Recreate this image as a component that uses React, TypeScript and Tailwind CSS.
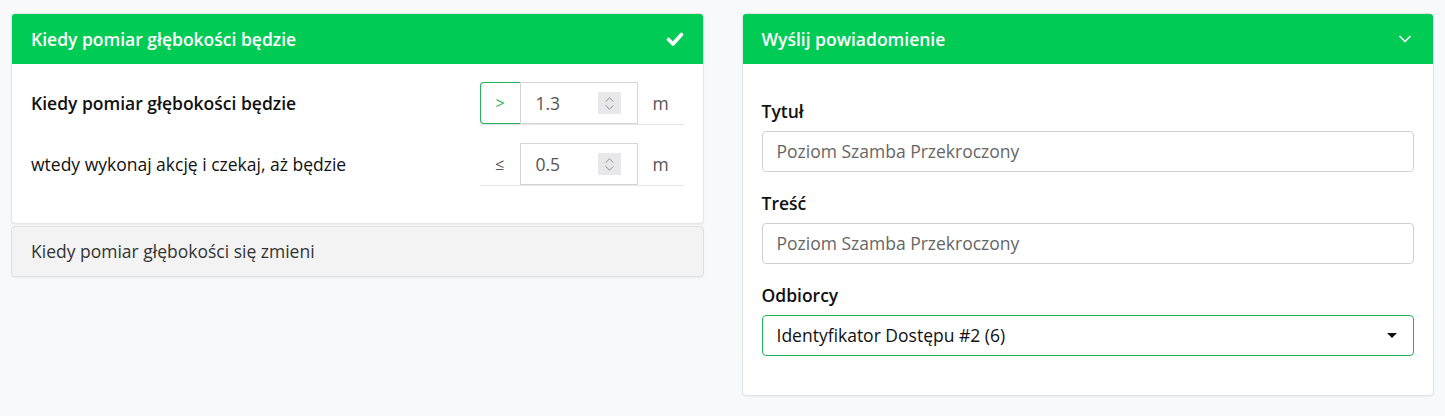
import { ChevronDown, ChevronsUpDown } from 'lucide-react';

function NumberField({ value }: { value: string }) {
  return (
    <div className="flex h-[42px] w-[118px] items-center justify-between border border-[#d4d4d4] bg-white pl-[15px] pr-[16px]">
      <span className="text-[17.5px] text-[#555]">{value}</span>
      <span className="flex h-[22px] w-[23px] items-center justify-center bg-[#e8e8ea]">
        <ChevronsUpDown size={17} strokeWidth={1.4} className="text-[#8c8c8c]" />
      </span>
    </div>
  );
}

function ConditionRow({
  label,
  bold,
  operator,
  active,
  value,
}: {
  label: string;
  bold?: boolean;
  operator: string;
  active?: boolean;
  value: string;
}) {
  return (
    <div className="flex items-center justify-between">
      <span className={`text-[17.5px] text-[#111] ${bold ? 'font-semibold' : ''}`}>{label}</span>
      <div className="flex w-[204px] items-center border-b border-[#e6e6e6]">
        <div
          className={`flex h-[42px] w-[40px] items-center justify-center text-[16px] ${
            active ? 'rounded-l-[4px] border border-r-0 border-[#22b35a] text-[#22b35a]' : 'text-[#555]'
          }`}
        >
          {operator}
        </div>
        <NumberField value={value} />
        <div className="flex h-[42px] flex-1 items-center justify-center text-[17.5px] text-[#555]">m</div>
      </div>
    </div>
  );
}

function TextField({ label, value }: { label: string; value: string }) {
  return (
    <div className="flex flex-col gap-[8px]">
      <span className="text-[17.5px] font-semibold leading-[24px] text-[#111]">{label}</span>
      <div className="flex h-[41px] items-center rounded-[4px] border border-[#cfcfcf] bg-white px-[14px] text-[17.5px] text-[#666]">
        {value}
      </div>
    </div>
  );
}

export default function App() {
  return (
    <div className="min-h-[416px] bg-[#f8f9fb] px-[11px] pt-[13px] font-['Open_Sans',sans-serif]">
      <div className="grid grid-cols-2 gap-[38px]">
        {/* Left column */}
        <div className="flex flex-col gap-[2px]">
          <div className="overflow-hidden rounded-[4px] border border-[#e3e6e3] bg-white shadow-[0_1px_2px_rgba(0,0,0,0.06)]">
            <div className="flex h-[50px] items-center justify-between bg-[#00cc55] pl-[19px] pr-[18px]">
              <span className="text-[17.5px] font-semibold text-white">Kiedy pomiar głębokości będzie</span>
              <svg width="20" height="20" viewBox="0 0 20 20" className="text-white">
                <path
                  d="M3.5 10.5 L8 15 L16.5 5.5"
                  fill="none"
                  stroke="currentColor"
                  strokeWidth="3.6"
                  strokeLinecap="round"
                  strokeLinejoin="round"
                />
              </svg>
            </div>
            <div className="flex flex-col gap-[18px] px-[19px] pb-[37px] pt-[18px]">
              <ConditionRow label="Kiedy pomiar głębokości będzie" bold operator=">" active value="1.3" />
              <ConditionRow label="wtedy wykonaj akcję i czekaj, aż będzie" operator="≤" value="0.5" />
            </div>
          </div>
          <div className="flex h-[51px] items-center rounded-[4px] border border-[#e0e0e0] bg-[#f3f3f3] pl-[19px] shadow-[0_1px_2px_rgba(0,0,0,0.06)]">
            <span className="text-[17.5px] text-[#333]">Kiedy pomiar głębokości się zmieni</span>
          </div>
        </div>

        {/* Right column */}
        <div className="self-start overflow-hidden rounded-[4px] border border-[#e3e6e3] bg-white shadow-[0_1px_2px_rgba(0,0,0,0.06)]">
          <div className="flex h-[50px] items-center justify-between bg-[#00cc55] pl-[19px] pr-[18px]">
            <span className="text-[17.5px] font-semibold text-white">Wyślij powiadomienie</span>
            <ChevronDown size={20} strokeWidth={2} className="text-white" />
          </div>
          <div className="flex flex-col gap-[19px] px-[19px] pb-[39px] pt-[35px]">
            <TextField label="Tytuł" value="Poziom Szamba Przekroczony" />
            <TextField label="Treść" value="Poziom Szamba Przekroczony" />
            <div className="flex flex-col gap-[8px]">
              <span className="text-[17.5px] font-semibold leading-[24px] text-[#111]">Odbiorcy</span>
              <div className="flex h-[41px] items-center justify-between rounded-[4px] border border-[#22b35a] bg-white pl-[14px] pr-[16px] text-[17.5px] text-[#111]">
                <span>Identyfikator Dostępu #2 (6)</span>
                <span className="h-0 w-0 border-x-[5px] border-t-[5px] border-x-transparent border-t-[#111]" />
              </div>
            </div>
          </div>
        </div>
      </div>
    </div>
  );
}
